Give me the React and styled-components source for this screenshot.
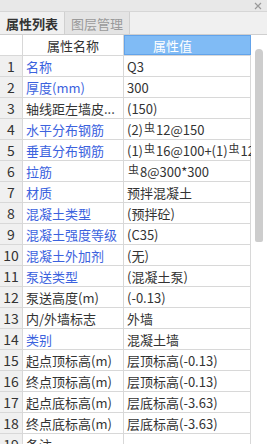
import { Fragment } from "react"
import styled, { createGlobalStyle } from "styled-components"

const Global = createGlobalStyle`
    html, body {
        margin: 0;
        padding: 0;
        background: #ffffff;
        overflow: hidden;
    }
    * { box-sizing: border-box; }
`

const Panel = styled.div`
    width: 267px;
    height: 444px;
    display: flex;
    flex-direction: column;
    overflow: hidden;
    background: #ffffff;
    font-family: "Noto Sans CJK SC", "Noto Sans", sans-serif;
    color: #333333;
`
const TitleBar = styled.div`
    height: 12px;
    flex: none;
    display: flex;
    justify-content: flex-end;
    align-items: center;
    padding-right: 5px;
    background: #e8e8e8;
    border-bottom: 1px solid #d6d6d6;
`
const TabBar = styled.div`
    height: 23px;
    flex: none;
    display: flex;
    background: #f0f0f0;
    border-bottom: 1px solid #cfcfcf;
`
const Tab = styled.div`
    width: 65px;
    display: flex;
    align-items: center;
    justify-content: center;
    font-size: 13px;
    font-weight: ${props => props.active ? 700 : 400};
    color: ${props => props.active ? "#333333" : "#9a9a9a"};
    background: ${props => props.active ? "#f0f0f0" : "#e4e4e4"};
    border-right: 1px solid #d0d0d0;
`
const Body = styled.div`
    flex: 1;
    display: flex;
    min-height: 0;
`
const Table = styled.div`
    width: 251px;
    display: grid;
    grid-template-columns: 23px 101px 127px;
    grid-auto-rows: 21px;
    grid-template-rows: 20px;
    align-content: start;
    border-right: 1px solid #d8d8d8;
    font-size: 13px;
`
const HeadCell = styled.div`
    display: flex;
    align-items: center;
    justify-content: center;
    padding-right: ${props => props.blue ? "30px" : "0"};
    color: ${props => props.blue ? "#ffffff" : "#333333"};
    background: ${props => props.blue ? "#80bbf5" : "#ffffff"};
    border: ${props => props.blue ? "1px solid #62a3ea" : "none"};
    border-right: ${props => props.blue ? "1px solid #62a3ea" : "1px solid #d8d8d8"};
    font-size: 13px;
`
const NumCell = styled.div`
    display: flex;
    align-items: center;
    justify-content: center;
    background: #f0f0f0;
    border-right: 1px solid #d8d8d8;
    border-top: 1px solid #d8d8d8;
    font-size: 14px;
`
const Cell = styled.div`
    display: flex;
    align-items: center;
    padding-left: 3px;
    white-space: nowrap;
    overflow: hidden;
    border-top: 1px solid #d8d8d8;
    border-right: ${props => props.value ? "none" : "1px solid #d8d8d8"};
    color: ${props => props.link ? "#3b62de" : "#333333"};
`
const Steel = styled.span`
    font-size: 11px;
    position: relative;
    top: -2px;
    margin: 0 1px;
`
const ScrollTrack = styled.div`
    flex: 1;
    display: flex;
    justify-content: center;
    padding-top: 14px;
`
const Thumb = styled.div`
    width: 8px;
    height: 193px;
    background: #cdcdcd;
    border-radius: 4px 4px 2px 2px;
`

const S = () => <Steel>虫</Steel>

const rows = [
    ["名称", "Q3", true],
    ["厚度(mm)", "300", true],
    ["轴线距左墙皮...", "(150)", false],
    ["水平分布钢筋", <>(2)<S />12@150</>, true],
    ["垂直分布钢筋", <>(1)<S />16@100+(1)<S />12@100</>, true],
    ["拉筋", <><S />8@300*300</>, true],
    ["材质", "预拌混凝土", true],
    ["混凝土类型", "(预拌砼)", true],
    ["混凝土强度等级", "(C35)", true],
    ["混凝土外加剂", "(无)", true],
    ["泵送类型", "(混凝土泵)", true],
    ["泵送高度(m)", "(-0.13)", false],
    ["内/外墙标志", "外墙", false],
    ["类别", "混凝土墙", true],
    ["起点顶标高(m)", "层顶标高(-0.13)", false],
    ["终点顶标高(m)", "层顶标高(-0.13)", false],
    ["起点底标高(m)", "层底标高(-3.63)", false],
    ["终点底标高(m)", "层底标高(-3.63)", false],
    ["备注", "", false],
]

const App = () => {
    return (
        <Panel>
            <Global />
            <TitleBar>
                <svg width="8" height="8" viewBox="0 0 8 8">
                    <path d="M1 1L7 7M7 1L1 7" stroke="#9a9a9a" strokeWidth="1.2" />
                </svg>
            </TitleBar>
            <TabBar>
                <Tab active>属性列表</Tab>
                <Tab>图层管理</Tab>
            </TabBar>
            <Body>
                <Table>
                    <HeadCell />
                    <HeadCell>属性名称</HeadCell>
                    <HeadCell blue>属性值</HeadCell>
                    {rows.map(([name, value, link], i) => (
                        <Fragment key={i}>
                            <NumCell>{i + 1}</NumCell>
                            <Cell link={link}>{name}</Cell>
                            <Cell value>{value}</Cell>
                        </Fragment>
                    ))}
                </Table>
                <ScrollTrack>
                    <Thumb />
                </ScrollTrack>
            </Body>
        </Panel>
    )
}

export default App
